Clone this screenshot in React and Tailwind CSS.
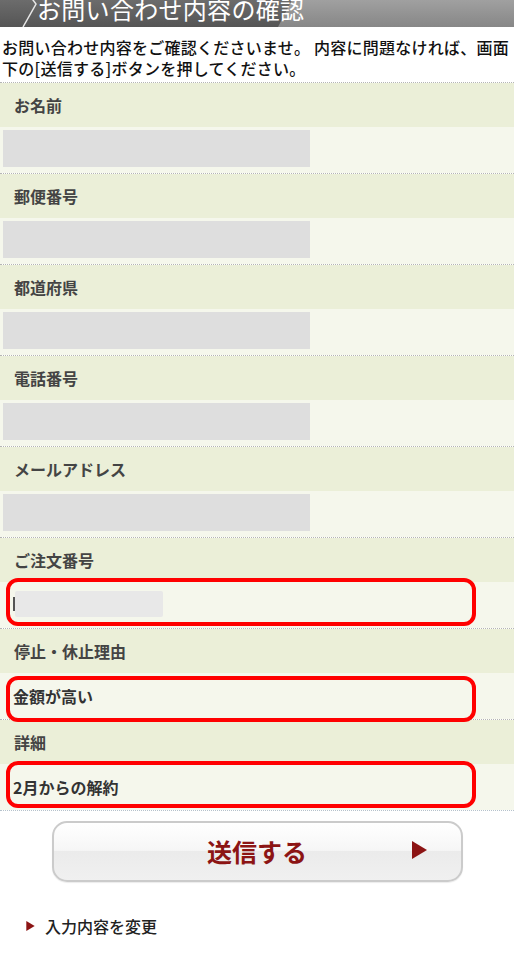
import React from 'react';

const font = { fontFamily: '"Noto Sans CJK JP", "Noto Sans", sans-serif' };

const Row = ({ label, mark, children }) => (
  <div className="border-t border-dotted border-[#b5b5b5]">
    <div className="flex h-[44px] items-center bg-[#ebefd8] pl-[14px] text-[16px] font-bold text-[#444]">{label}</div>
    <div className="relative h-[46px] bg-[#f5f7ec]">
      {children}
      {mark && <div className={`absolute left-[6px] w-[470px] rounded-[12px] border-4 border-[#ff0000] ${mark}`} />}
    </div>
  </div>
);

const Blank = () => <div className="pl-[3px] pt-[3px]"><div className="h-[37px] w-[307px] bg-[#dedede]" /></div>;

const Value = ({ children }) => (
  <div className="flex h-full items-center pl-[13px] text-[16px] font-bold text-[#333]">{children}</div>
);

const Arrow = ({ className }) => (
  <svg className={className} viewBox="0 0 10 12">
    <polygon points="0,0 10,6 0,12" fill="#8c1414" />
  </svg>
);

export default function App() {
  return (
    <div className="min-h-screen w-[514px] bg-white" style={font}>
      {/* title bar */}
      <div className="relative h-[27px] overflow-hidden bg-gradient-to-b from-[#a0a0a0] to-[#878787]">
        <div className="absolute inset-y-0 left-0 w-[292px] bg-gradient-to-b from-[#6c6c6c] to-[#555555] [clip-path:polygon(0_0,100%_0,calc(100%-14px)_100%,0_100%)]" />
        <svg className="absolute left-0 top-0 h-[27px] w-[40px]" viewBox="0 0 40 27">
          <polyline points="27,-8 36,4 23,27" fill="none" stroke="#e6e6e6" strokeWidth="1.5" />
        </svg>
        <h1 className="relative -mt-[3px] pl-[37px] text-[24px] leading-[24px] tracking-[0.3px] text-white">お問い合わせ内容の確認</h1>
      </div>

      <p className="pb-[3px] pl-[2px] pt-[10px] text-[16px] font-medium leading-[21px] tracking-[0.25px] text-[#111]">
        お問い合わせ内容をご確認くださいませ。 内容に問題なければ、画面下の[送信する]ボタンを押してください。
      </p>

      <div className="border-b border-dotted border-[#b5c2cc]">
        <Row label="お名前"><Blank /></Row>
        <Row label="郵便番号"><Blank /></Row>
        <Row label="都道府県"><Blank /></Row>
        <Row label="電話番号"><Blank /></Row>
        <Row label="メールアドレス"><Blank /></Row>
        <Row label="ご注文番号" mark="-top-[4px] bottom-[2px]">
          <div className="pl-[13px] pt-[9px]">
            <div className="flex h-[26px] items-center">
              <div className="h-[14px] w-[2px] bg-[#555]" />
              <div className="h-full w-[148px] rounded-[2px] bg-[#e8e8e8]" />
            </div>
          </div>
        </Row>
        <Row label="停止・休止理由" mark="top-[3px] -bottom-[3px]">
          <Value>金額が高い</Value>
        </Row>
        <Row label="詳細" mark="-top-[3px] bottom-[2px]">
          <Value>2月からの解約</Value>
        </Row>
      </div>

      <div className="pt-[10px]">
        <button className="relative mx-auto flex h-[61px] w-[411px] items-center justify-center rounded-[15px] border-2 border-[#cbcbcb] bg-[linear-gradient(to_bottom,#ffffff_0%,#f6f6f6_48%,#ebebeb_50%,#f0f0f0_100%)] shadow-[0_1px_1px_rgba(0,0,0,0.08)]">
          <span className="text-[25px] font-bold leading-none text-[#8c1414]">送信する</span>
          <Arrow className="absolute right-[34px] top-[18px] h-[18px] w-[15px]" />
        </button>
      </div>

      <div className="mt-[34px] flex items-center gap-[10px] pl-[26px] text-[16px] font-medium leading-[20px] text-[#222]">
        <Arrow className="h-[10px] w-[9px]" />
        <span>入力内容を変更</span>
      </div>
    </div>
  );
}
